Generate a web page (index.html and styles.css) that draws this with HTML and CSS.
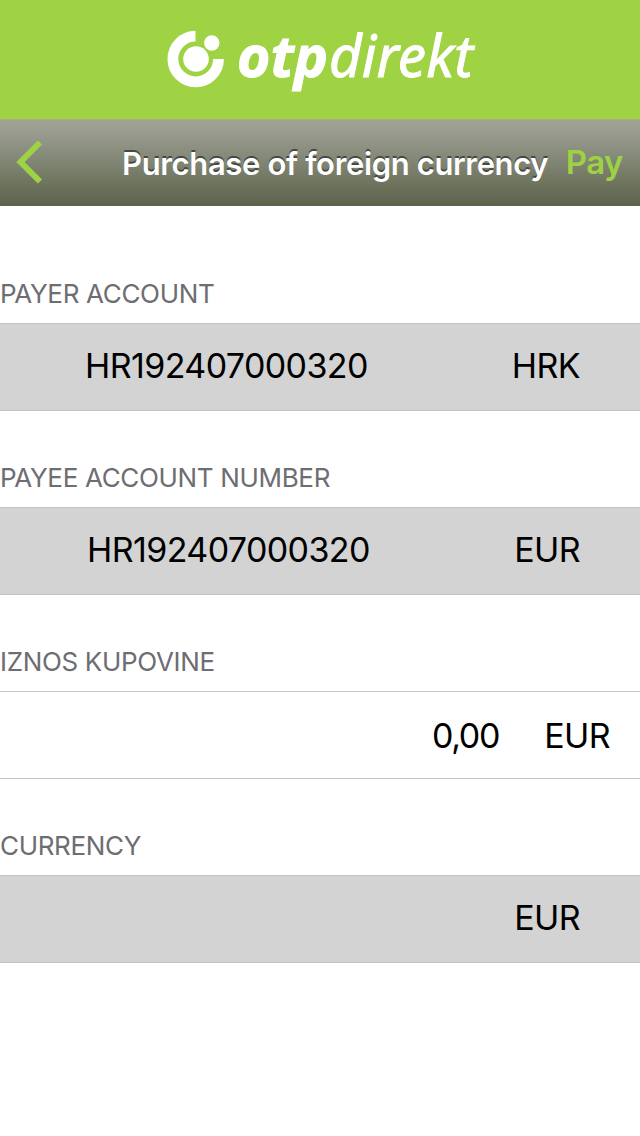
FILE: index.html
```html
<!DOCTYPE html>
<html lang="en">
<head>
    <meta charset="UTF-8">
    <meta name="viewport" content="width=device-width, initial-scale=1.0">
    <title>OTPdirekt - Purchase of foreign currency</title>
    <link rel="stylesheet" href="styles.css">
</head>
<body>

    <!-- Brand Header -->
    <header class="brand">
        <svg class="logo" width="340" height="119" viewBox="0 0 340 119">
            <path class="logo-ring" d="M35.5 36.2 A22.8 22.8 0 1 0 58.5 59"/>
            <circle cx="36" cy="59" r="12.8"/>
            <circle cx="51.8" cy="43" r="7.7"/>
            <text class="logo-otp" x="77" y="77" textLength="91" lengthAdjust="spacingAndGlyphs">otp</text>
            <text class="logo-direkt" x="169" y="77" textLength="144" lengthAdjust="spacingAndGlyphs">direkt</text>
        </svg>
    </header>

    <!-- Navigation Bar -->
    <nav class="navbar">
        <a class="back" href="#" aria-label="Back">
            <svg width="30" height="46" viewBox="0 0 30 46">
                <path d="M25 3.5 L5.5 23 L25 42.5"/>
            </svg>
        </a>
        <h1 class="title">Purchase of foreign currency</h1>
        <a class="pay" href="#">Pay</a>
    </nav>

    <!-- Payment Form -->
    <main class="form">
        <section class="group">
            <h2>PAYER ACCOUNT</h2>
            <div class="row locked">
                <span class="account">HR192407000320</span>
                <span class="currency">HRK</span>
            </div>
        </section>

        <section class="group">
            <h2>PAYEE ACCOUNT NUMBER</h2>
            <div class="row locked payee">
                <span class="account">HR192407000320</span>
                <span class="currency">EUR</span>
            </div>
        </section>

        <section class="group">
            <h2>IZNOS KUPOVINE</h2>
            <div class="row amount-row">
                <span class="amount">0,00</span>
                <span class="currency">EUR</span>
            </div>
        </section>

        <section class="group">
            <h2>CURRENCY</h2>
            <div class="row locked">
                <span class="currency">EUR</span>
            </div>
        </section>
    </main>

</body>
</html>
```
FILE: styles.css
```css
/* General Styles */
* { box-sizing: border-box; }
body { font-family: Inter, "Liberation Sans", sans-serif; background-color: white; color: black; margin: 0; }

/* Brand Header */
.brand { height: 119px; padding-left: 160px; background-color: #a0d343; }
.logo { display: block; fill: white; overflow: visible; }
.logo-ring { fill: none; stroke: white; stroke-width: 10.8; }
.logo-otp, .logo-direkt { font-family: "Noto Sans", sans-serif; font-style: italic; font-size: 58px; }
.logo-otp { font-weight: bold; stroke: white; stroke-width: 1; }
.logo-direkt { stroke: white; stroke-width: 0.9; }

/* Navigation Bar */
.navbar { height: 87px; padding: 0 17px 0 15px; display: flex; align-items: center; background: linear-gradient(#a0a296, #999c8e 15%, #5c624a); border-top: 1px solid #a6b077; }
.back { display: flex; width: 107px; margin-bottom: 2px; }
.back path { fill: none; stroke: #9dd245; stroke-width: 6; }
.title { margin: 1px 0 0; flex: 1; color: white; font-size: 31px; font-weight: 600; letter-spacing: -0.35px; white-space: nowrap; text-shadow: 0 -2px 0 #464941; }
.pay { margin-bottom: 2px; color: #9dd245; font-size: 33px; font-weight: 600; letter-spacing: -0.5px; text-decoration: none; }

/* Form Groups */
.form { padding-top: 21px; }
.group h2 { height: 96px; margin: 0; padding-top: 50px; color: #6d6d72; font-size: 26px; line-height: 34px; font-weight: 400; letter-spacing: -0.33px; }
.row { height: 88px; padding: 0 60px 3px 85px; display: flex; align-items: center; justify-content: flex-end; border-top: 1px solid #c8c7cc; border-bottom: 1px solid #c8c7cc; font-size: 34px; letter-spacing: -0.6px; }
.locked { background-color: #d3d3d3; border-color: #c3c3c3; }
.payee { padding-left: 87px; }
.account { margin-right: auto; }
.amount-row { padding: 0 30px 0 0; gap: 45px; }
.amount { letter-spacing: -1.3px; }
```
